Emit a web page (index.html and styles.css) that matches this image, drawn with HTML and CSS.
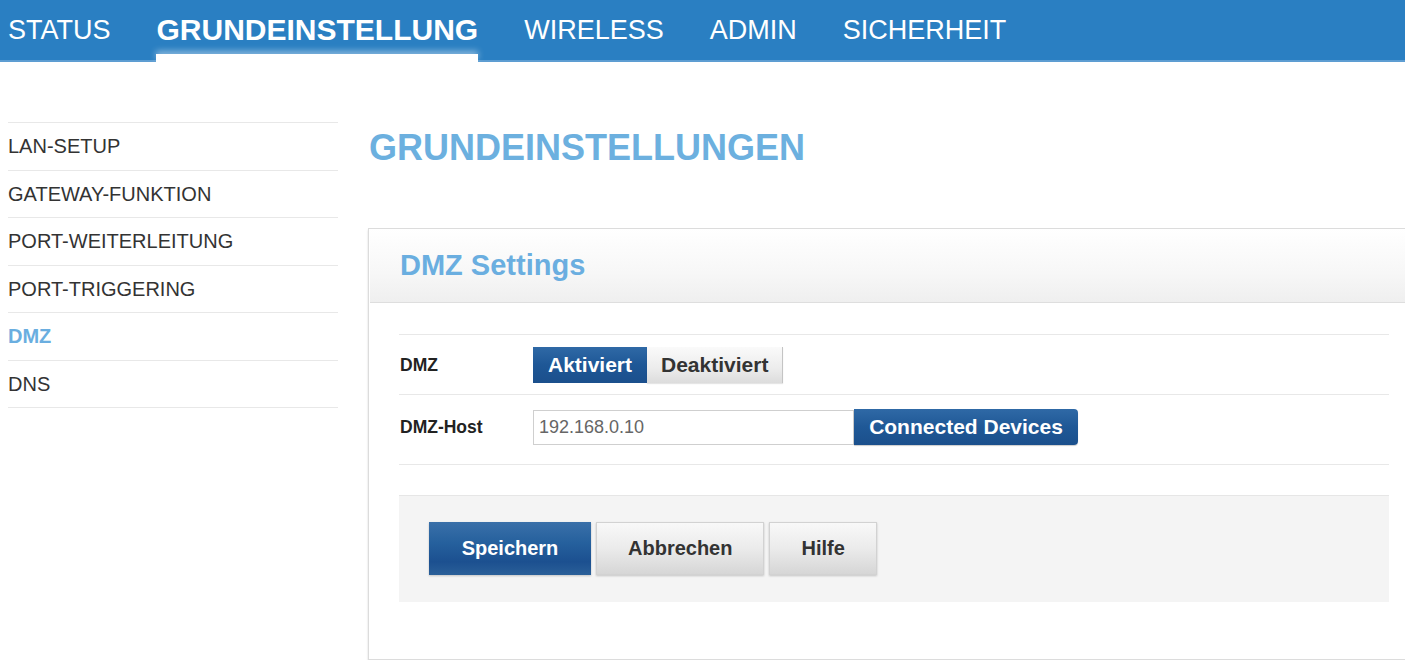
FILE: index.html
```html
<!DOCTYPE html>
<html lang="de">
<head>
  <meta charset="UTF-8" />
  <meta name="viewport" content="width=device-width, initial-scale=1.0"/>
  <title>Grundeinstellungen - DMZ</title>
  <link rel="stylesheet" href="styles.css">
</head>
<body>

  <ul class="topnav">
    <li>STATUS</li>
    <li class="active">GRUNDEINSTELLUNG</li>
    <li>WIRELESS</li>
    <li>ADMIN</li>
    <li>SICHERHEIT</li>
  </ul>

  <div class="page">
    <ul class="sidenav">
      <li>LAN-SETUP</li>
      <li>GATEWAY-FUNKTION</li>
      <li>PORT-WEITERLEITUNG</li>
      <li>PORT-TRIGGERING</li>
      <li class="active">DMZ</li>
      <li>DNS</li>
    </ul>

    <div class="main">
      <h1>GRUNDEINSTELLUNGEN</h1>

      <div class="panel">
        <div class="panel-head">
          <h2>DMZ Settings</h2>
        </div>
        <div class="panel-body">
          <div class="form-row first">
            <label>DMZ</label>
            <div class="toggle">
              <button class="on">Aktiviert</button>
              <button class="off">Deaktiviert</button>
            </div>
          </div>
          <div class="form-row second">
            <label>DMZ-Host</label>
            <div class="host">
              <input type="text" value="192.168.0.10">
              <button class="devices">Connected Devices</button>
            </div>
          </div>

          <div class="actions">
            <button class="btn primary">Speichern</button>
            <button class="btn">Abbrechen</button>
            <button class="btn">Hilfe</button>
          </div>
        </div>
      </div>
    </div>
  </div>

</body>
</html>
```

FILE: styles.css
```css
html, body {
  overflow: hidden;
}
body {
  font-family: "Liberation Sans", Arial, sans-serif;
  margin: 0;
  padding: 0;
  background-color: #fff;
  color: #333;
}
ul {
  list-style: none;
  margin: 0;
  padding: 0;
}
button {
  font-family: "Liberation Sans", Arial, sans-serif;
  cursor: pointer;
}

/* top navigation */
.topnav {
  display: flex;
  gap: 46px;
  height: 60px;
  padding-left: 8px;
  background-color: #2a7fc2;
  border-bottom: 2px solid #5d9dd2;
}
.topnav li {
  position: relative;
  line-height: 60px;
  font-size: 27px;
  color: #fff;
}
.topnav li.active {
  font-size: 30px;
  font-weight: bold;
}
.topnav li.active::after {
  content: "";
  position: absolute;
  left: -1px;
  right: 0;
  bottom: -2px;
  height: 8px;
  background-color: #fff;
  box-shadow: 0 -3px 6px rgba(255, 255, 255, 0.45);
}

/* page columns */
.page {
  display: flex;
  gap: 30px;
  padding-left: 8px;
}
.sidenav {
  flex: 0 0 330px;
  margin-top: 60px;
  border-top: 1px solid #e8e8e8;
}
.sidenav li {
  line-height: 46.5px;
  font-size: 20px;
  color: #333;
  border-bottom: 1px solid #e8e8e8;
}
.sidenav li.active {
  color: #6aaee0;
  font-weight: bold;
}

.main {
  flex: 0 0 1052px;
  padding-top: 66px;
}
.main h1 {
  margin: 0 0 60px 1px;
  font-size: 36px;
  line-height: 40px;
  color: #6cb0df;
}

/* settings panel */
.panel {
  border: 1px solid #dcdcdc;
  box-shadow: 0 2px 2px rgba(0, 0, 0, 0.15);
  padding-bottom: 57px;
}
.panel-head {
  height: 73px;
  margin: 0 0 0 1px;
  padding-left: 30px;
  display: flex;
  align-items: center;
  background: linear-gradient(#fff, #f7f7f7 60%, #efefef);
  border-bottom: 1px solid #dedede;
}
.panel-head h2 {
  margin: 0;
  font-size: 29px;
  color: #6aaee0;
}
.panel-body {
  padding: 31px 30px 0;
}

.form-row {
  display: flex;
  align-items: center;
  border-top: 1px solid #e8e8e8;
}
.form-row.first {
  padding: 12px 0 11px;
}
.form-row.second {
  padding: 14px 0 19px;
  border-bottom: 1px solid #e8e8e8;
}
.form-row label {
  flex: 0 0 133px;
  padding-left: 1px;
  font-size: 17.5px;
  font-weight: bold;
  color: #222;
}

.toggle {
  display: flex;
}
.toggle button {
  height: 36px;
  font-size: 21px;
  font-weight: bold;
  border: none;
  padding: 0 14px;
}
.toggle .on {
  width: 114px;
  color: #fff;
  background: linear-gradient(#2f69a6, #1e5796 50%, #1b4f8c);
}
.toggle .off {
  width: 136px;
  color: #333;
  background: linear-gradient(#fafafa, #ececec 60%, #dcdcdc);
  border-right: 1px solid #c4c4c4;
  box-shadow: 0 1px 1px rgba(0, 0, 0, 0.1);
}

.host {
  display: flex;
  align-items: center;
}
.host input {
  width: 321px;
  height: 35px;
  box-sizing: border-box;
  margin: 0;
  padding: 0 5px;
  border: 1px solid #cfcfcf;
  font-family: "Liberation Sans", Arial, sans-serif;
  font-size: 18px;
  color: #666;
}
.devices {
  width: 224px;
  height: 36px;
  border: none;
  border-radius: 0 4px 4px 0;
  font-size: 21px;
  font-weight: bold;
  color: #fff;
  background: linear-gradient(#2f69a6, #1f5896 50%, #1b4f8c);
  box-shadow: 0 1px 1px rgba(0, 0, 0, 0.2);
}

/* action bar */
.actions {
  display: flex;
  gap: 5px;
  margin-top: 30px;
  padding: 26px 30px 27px;
  background-color: #f4f4f4;
  border-top: 1px solid #e6e6e6;
}
.btn {
  height: 53px;
  padding: 0 31px;
  border: 1px solid #d2d2d2;
  font-size: 20px;
  font-weight: bold;
  color: #333;
  background: linear-gradient(#f8f8f8, #ebebeb 50%, #d6d6d6);
  box-shadow: 0 1px 2px rgba(0, 0, 0, 0.2);
}
.btn.primary {
  width: 162px;
  border: none;
  color: #fff;
  background: linear-gradient(#3a70a9, #25609d 40%, #1c5090 75%, #2a5f98);
}
```
